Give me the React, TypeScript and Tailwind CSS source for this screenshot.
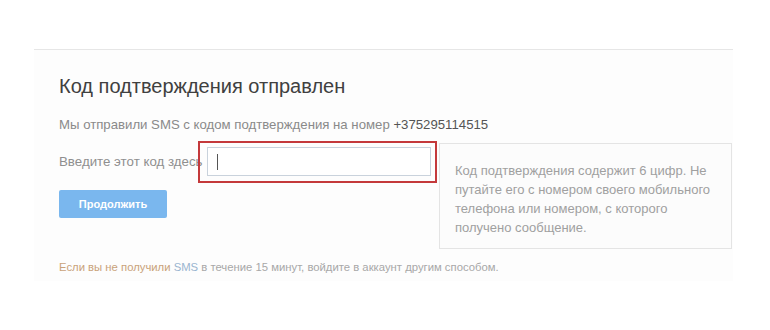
import React from 'react';

const App = () => {
	return (
		<div className="w-[770px] h-[330px] bg-white font-['Liberation_Sans',Arial,sans-serif] pt-[49px]">
			<div className="ml-[34px] w-[699px] h-[232px] border-t border-[#e6e6e6] bg-[#fdfdfd] pl-[25px] pt-[24px] relative">
				<div className="text-[20px] leading-[24px] text-[#404040]">
					Код подтверждения отправлен
				</div>
				<div className="mt-[19px] text-[13.2px] leading-[16px] text-[#8a8a8a]">
					Мы отправили SMS с кодом подтверждения на номер{' '}
					<span className="text-[#555]">+375295114515</span>
				</div>
				<div className="mt-[14px] flex items-center relative">
					<div className="text-[13.3px] text-[#8f8f8f] w-[148px] whitespace-nowrap">
						Введите этот код здесь
					</div>
					<div className="w-[224px] h-[29px] border border-[#c9d2dc] bg-white flex items-center pl-[9px]">
						<div className="w-px h-[16px] bg-[#555]" />
					</div>
					<div className="absolute left-[139px] top-[-6px] w-[239px] h-[42px] border-2 border-[#c4393b]" />
					<div className="absolute left-[380px] top-[-4px] w-[293px] h-[106px] border border-[#e4e4e4] bg-[#fcfcfc] pl-[15px] pt-[17px] text-[13px] leading-[19px] text-[#a0a0a0] whitespace-nowrap">
						Код подтверждения содержит 6 цифр. Не
						<br />
						путайте его с номером своего мобильного
						<br />
						телефона или номером, с которого
						<br />
						получено сообщение.
					</div>
				</div>
				<button className="mt-[14px] w-[108px] h-[28px] rounded-[2px] bg-[#7ab7ee] text-white text-[11px] font-bold flex items-center justify-center">
					Продолжить
				</button>
				<div className="mt-[41px] text-[11.3px] text-[#a8a8a8]">
					<span className="text-[#c9a27a]">Если вы не получили</span>{' '}
					<span className="text-[#9ab5d0]">SMS</span> в течение 15 минут, войдите в аккаунт другим способом.
				</div>
			</div>
		</div>
	);
};

export default App;
